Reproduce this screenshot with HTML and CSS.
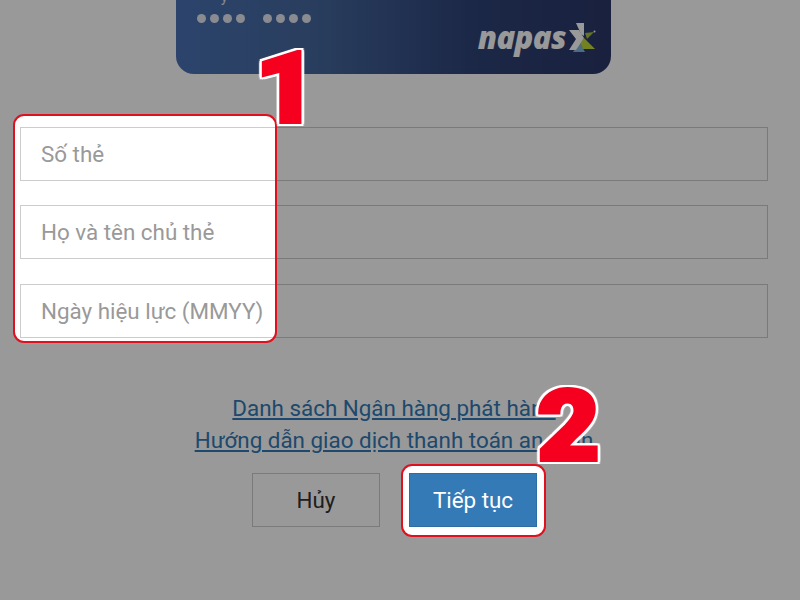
FILE: index.html
```html
<!DOCTYPE html>
<html lang="vi">
<head>
<meta charset="utf-8">
<title>Thanh toán</title>
<link rel="stylesheet" href="styles.css">
</head>
<body>
<main class="page">
  <section class="card">
    <div class="card-label">y</div>
    <div class="card-dots">
      <div class="dot-group"><i></i><i></i><i></i><i></i></div>
      <div class="dot-group"><i></i><i></i><i></i><i></i></div>
    </div>
    <div class="brand">
      <span class="brand-name">napas</span>
      <svg class="brand-mark" viewBox="570 23 27 30" aria-hidden="true">
        <path fill="#7fb2dc" d="M574 52H586L581 43Z" />
        <path fill="#c3d93a" d="M585 38L596 49H584L581 43Z" />
        <path fill="#a8c040" d="M586 33L595 32L588 39Z" />
        <path fill="#fff" d="M577 23H585V36L582 34Z" />
        <path fill="#fff" d="M570 30H580L585 38L577 50H570L577 39Z" />
        <circle cx="595.5" cy="31.5" r="1" fill="#fff" />
      </svg>
    </div>
  </section>

  <form class="fields">
    <div class="field">Số thẻ</div>
    <div class="field">Họ và tên chủ thẻ</div>
    <div class="field">Ngày hiệu lực (MMYY)</div>
  </form>

  <nav class="links">
    <a href="#">Danh sách Ngân hàng phát hành</a>
    <a href="#">Hướng dẫn giao dịch thanh toán an toàn</a>
  </nav>

  <div class="actions">
    <button class="btn btn-cancel" type="button">Hủy</button>
    <button class="btn btn-primary" type="button">Tiếp tục</button>
  </div>
</main>

<svg class="dim" viewBox="0 0 800 600" aria-hidden="true">
  <path class="dim-fill" fill-rule="evenodd" d="M0 0H800V600H0Z M24 115H266a10 10 0 0 1 10 10V332a10 10 0 0 1-10 10H24a10 10 0 0 1-10-10V125a10 10 0 0 1 10-10Z M412 465H535a10 10 0 0 1 10 10V526a10 10 0 0 1-10 10H412a10 10 0 0 1-10-10V475a10 10 0 0 1 10-10Z"/>
  <rect class="mark-box" x="14" y="115" width="262" height="227" rx="10"/>
  <rect class="mark-box" x="402" y="465" width="143" height="71" rx="10"/>
</svg>
<div class="step step-one">1</div>
<div class="step step-two">2</div>
</body>
</html>
```
FILE: styles.css
```css
* { box-sizing: border-box; }
html, body { margin: 0; padding: 0; }
body {
  width: 800px;
  height: 600px;
  overflow: hidden;
  position: relative;
  background: #fff;
  font-family: Roboto, "Noto Sans", sans-serif;
}
.page { display: flex; flex-direction: column; align-items: stretch; }

.card {
  align-self: flex-start;
  margin-left: 176px;
  width: 435px;
  height: 74px;
  border-radius: 0 0 18px 18px;
  background: linear-gradient(90deg, #4a71b4 0%, #46699f 30%, #2f4377 68%, #2a3768 100%);
  display: flex;
  flex-direction: column;
  padding: 0 15px 0 21px;
  overflow: hidden;
}
.card-label {
  height: 14px;
  margin-top: -10px;
  margin-bottom: 10px;
  padding-left: 24px;
  font-size: 14px;
  line-height: 14px;
  color: #e4e8f2;
}
.card-dots { display: flex; gap: 18px; }
.dot-group { display: flex; gap: 4px; }
.dot-group i { width: 9px; height: 9px; border-radius: 50%; background: #e4e8f2; display: block; }
.brand {
  display: flex;
  align-items: flex-start;
  justify-content: flex-end;
}
.brand-name {
  font-family: "Open Sans", sans-serif;
  font-weight: 800;
  font-style: italic;
  font-size: 31px;
  line-height: 34px;
  letter-spacing: -.6px;
  margin: -3px 3px 0 0;
  color: #fff;
}
.brand-mark { width: 27px; height: 30px; }

.fields {
  margin: 53px 32px 0 20px;
  display: flex;
  flex-direction: column;
  gap: 24.4px;
}
.field {
  height: 54px;
  border: 1px solid #ccc;
  background: #fff;
  padding-left: 20px;
  font-size: 22.4px;
  line-height: 52px;
  color: #999;
}

.links {
  margin-top: 54px;
  display: flex;
  flex-direction: column;
  align-items: center;
  padding-right: 12px;
}
.links a {
  font-size: 22.4px;
  line-height: 32px;
  color: #337ab7;
  text-decoration: underline;
}

.actions {
  margin: 17px 0 0 252px;
  display: flex;
  gap: 29px;
}
.btn {
  width: 128px;
  height: 54px;
  font-family: inherit;
  font-size: 22.4px;
  padding: 0;
  border-radius: 0;
}
.btn-cancel { background: #fff; border: 1px solid #ccc; color: #333; }
.btn-primary { background: #337ab7; border: 1px solid #2e6da4; color: #fff; }

.dim { position: absolute; left: 0; top: 0; width: 800px; height: 600px; }
.dim-fill { fill: rgba(0, 0, 0, .4); }
.mark-box { fill: none; stroke: #e0101e; stroke-width: 2; }

.step {
  position: absolute;
  font-family: Roboto, sans-serif;
  font-weight: 900;
  font-size: 98px;
  line-height: 100px;
  color: #f5001e;
  -webkit-text-stroke: 4px #f5001e;
  transform: scaleX(1.1);
  filter: drop-shadow(2px 0 0 #fff) drop-shadow(-2px 0 0 #fff) drop-shadow(0 2px 0 #fff) drop-shadow(0 -2px 0 #fff);
}
.step-one { left: 258px; top: 39px; }
.step-two { left: 540px; top: 377px; }
```
